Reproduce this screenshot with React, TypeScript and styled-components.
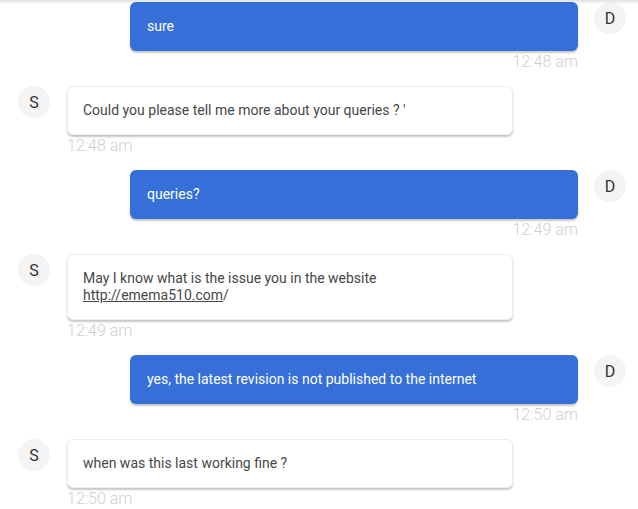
import React from "react";
import styled, { createGlobalStyle } from "styled-components";

const Global = createGlobalStyle`
  html, body { margin: 0; padding: 0; background: #fff; }
  body { font-family: Roboto, "Noto Sans", Arial, sans-serif; overflow: hidden; }
`;

const TopShade = styled.div`
  position: fixed;
  top: 0;
  left: 0;
  right: 0;
  height: 4px;
  background: linear-gradient(rgba(0,0,0,0.12), rgba(0,0,0,0));
  pointer-events: none;
`;

const List = styled.div`
  display: flex;
  flex-direction: column;
  padding: 2px 12px 0 18px;
`;

const Row = styled.div<{ $mine: boolean }>`
  display: flex;
  flex-direction: ${(p) => (p.$mine ? "row-reverse" : "row")};
  align-items: flex-start;
  gap: ${(p) => (p.$mine ? "16px" : "17px")};
  margin-bottom: 15px;
`;

const Avatar = styled.div`
  width: 32px;
  height: 32px;
  flex: 0 0 32px;
  border-radius: 50%;
  background: #f4f4f4;
  color: #333;
  font-size: 16px;
  display: flex;
  align-items: center;
  justify-content: center;
`;

const Column = styled.div<{ $mine: boolean }>`
  display: flex;
  flex-direction: column;
  align-items: ${(p) => (p.$mine ? "flex-end" : "flex-start")};
`;

const Bubble = styled.div<{ $mine: boolean }>`
  box-sizing: border-box;
  width: ${(p) => (p.$mine ? "448px" : "446px")};
  padding: ${(p) => (p.$mine ? "16px 17px" : "15px 15px")};
  border-radius: 6px;
  font-size: 14px;
  line-height: 17px;
  background: ${(p) => (p.$mine ? "#356fd7" : "#fff")};
  color: ${(p) => (p.$mine ? "#fff" : "#474747")};
  border: ${(p) => (p.$mine ? "none" : "1px solid #ececec")};
  box-shadow: 0 2px 2px rgba(0, 0, 0, 0.22);
`;

const Link = styled.a`
  color: inherit;
  text-decoration: underline;
`;

const Time = styled.div`
  font-size: 16px;
  font-weight: 300;
  line-height: 18px;
  margin-top: 2px;
  color: #cfcfcf;
`;

type Msg = { mine: boolean; text: React.ReactNode; time: string };

const messages: Msg[] = [
  { mine: true, text: "sure", time: "12:48 am" },
  { mine: false, text: "Could you please tell me more about your queries ? '", time: "12:48 am" },
  { mine: true, text: "queries?", time: "12:49 am" },
  {
    mine: false,
    text: (
      <>
        May I know what is the issue you in the website
        <br />
        <Link href="#">http://emema510.com</Link>/
      </>
    ),
    time: "12:49 am",
  },
  { mine: true, text: "yes, the latest revision is not published to the internet", time: "12:50 am" },
  { mine: false, text: "when was this last working fine ?", time: "12:50 am" },
];

export default function App() {
  return (
    <>
      <Global />
      <List>
        {messages.map((m, i) => (
          <Row key={i} $mine={m.mine}>
            <Avatar>{m.mine ? "D" : "S"}</Avatar>
            <Column $mine={m.mine}>
              <Bubble $mine={m.mine}>{m.text}</Bubble>
              <Time>{m.time}</Time>
            </Column>
          </Row>
        ))}
      </List>
      <TopShade />
    </>
  );
}
